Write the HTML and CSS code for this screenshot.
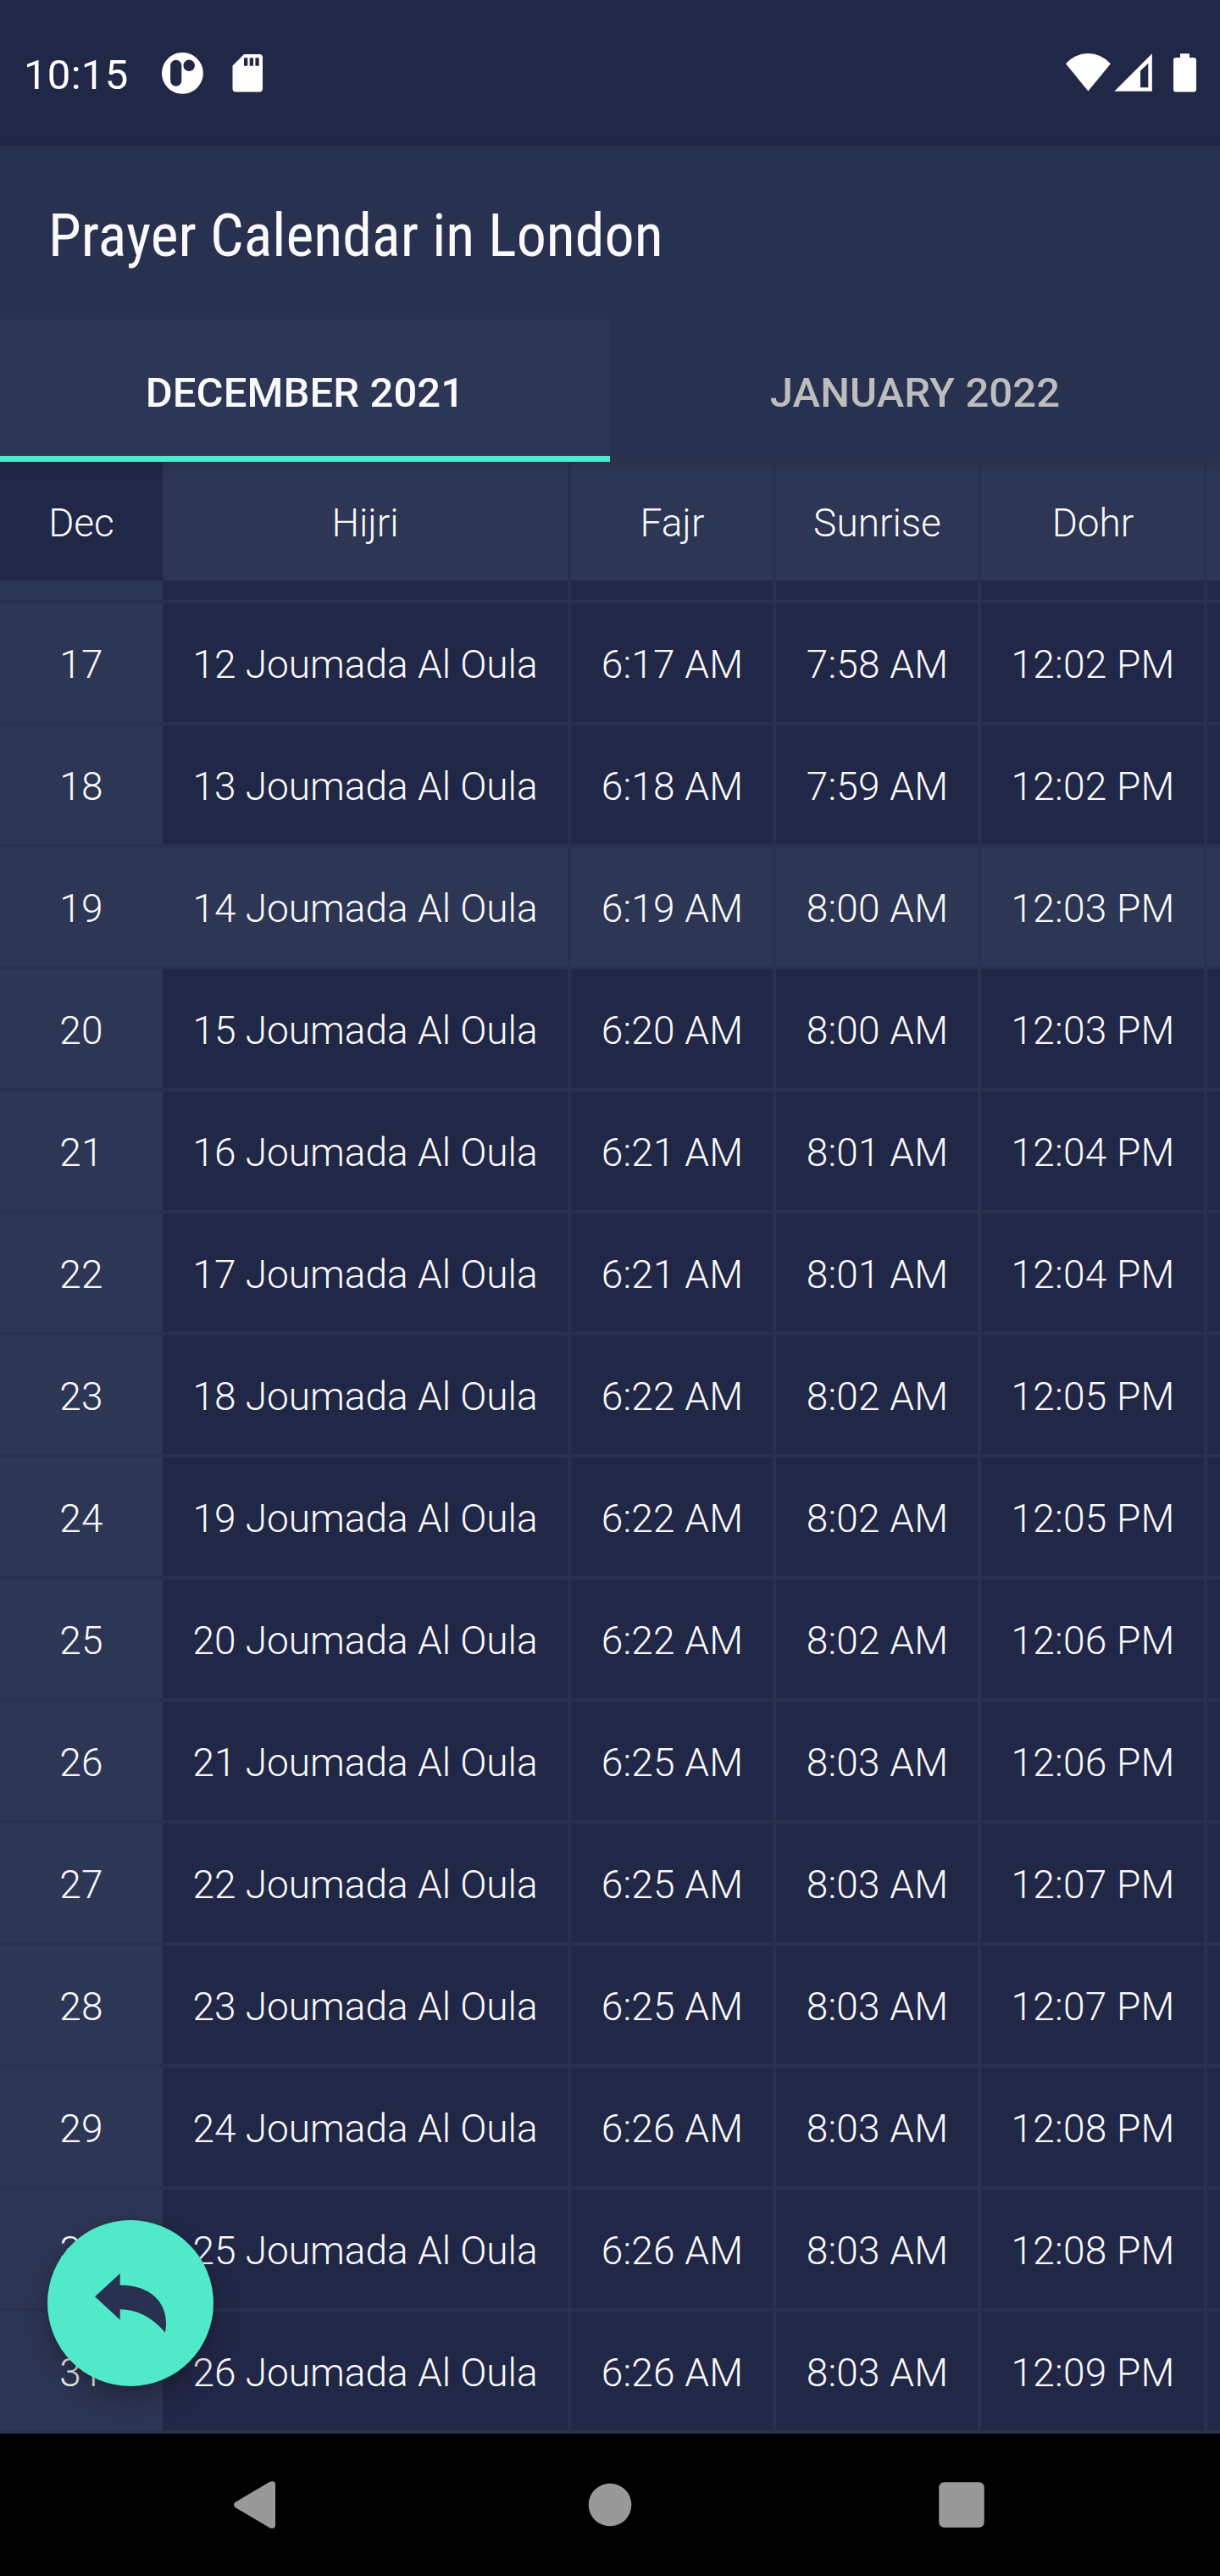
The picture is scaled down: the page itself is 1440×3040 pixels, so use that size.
FILE: index.html
```
<!DOCTYPE html>
<html lang="en">
<head>
<meta charset="utf-8">
<title>Prayer Calendar in London</title>
<link rel="stylesheet" href="styles.css">
</head>
<body>
<div class="screen">
  <div class="status-bar">
    <span class="clock">10:15</span>
    <svg class="notif-icons" viewBox="190 60 124 52" width="124" height="52">
      <path fill="#fff" fill-rule="evenodd" d="M215.4 62a24.4 24.4 0 1 0 .01 0zM207.7 70.7a6.6 6.6 0 0 1 6.6 6.6v17.8a6.6 6.6 0 0 1-13.2 0V77.3a6.6 6.6 0 0 1 6.6-6.6zM223.2 70.6a6.7 6.7 0 1 1-.01 0z"/>
      <path fill="#fff" fill-rule="evenodd" d="M288 64H306a4 4 0 0 1 4 4V104.500a4 4 0 0 1-4 4H278.500a4 4 0 0 1-4-4V77.500zM288 68.300V77.700H292.300V68.300zM294.700 68.300V77.700H299V68.300zM301.400 68.300V77.700H305.700V68.300z"/>
    </svg>
    <svg class="system-icons" viewBox="1256 60 158 52" width="158" height="52">
      <path fill="#fff" d="M1284.400 107.500L1258 75.200Q1269.500 63 1284.400 63T1310.900 75.200z"/>
      <path fill="#fff" fill-rule="evenodd" d="M1315.300 107.700L1359.800 63.200V107.700zM1346 83.600V103.200H1355.300V74.800z"/>
      <path fill="#fff" d="M1393 63.200H1404V68H1409a3 3 0 0 1 3 3V105.500a3 3 0 0 1-3 3H1388a3 3 0 0 1-3-3V71a3 3 0 0 1 3-3H1393z"/>
    </svg>
  </div>

  <header class="app-bar">
    <h1 class="title">Prayer Calendar in London</h1>
    <nav class="tabs">
      <div class="tab active">DECEMBER 2021</div>
      <div class="tab january">JANUARY 2022</div>
    </nav>
  </header>

  <div class="row head"><div class="day">Dec</div><div>Hijri</div><div>Fajr</div><div>Sunrise</div><div>Dohr</div><div></div></div>

  <main class="body">
    <div class="row partial"><div class="day"></div><div></div><div></div><div></div><div></div><div></div></div>
    <div class="row"><div class="day">17</div><div>12 Joumada Al Oula</div><div>6:17 AM</div><div>7:58 AM</div><div>12:02 PM</div><div></div></div>
    <div class="row"><div class="day">18</div><div>13 Joumada Al Oula</div><div>6:18 AM</div><div>7:59 AM</div><div>12:02 PM</div><div></div></div>
    <div class="row today"><div class="day">19</div><div>14 Joumada Al Oula</div><div>6:19 AM</div><div>8:00 AM</div><div>12:03 PM</div><div></div></div>
    <div class="row"><div class="day">20</div><div>15 Joumada Al Oula</div><div>6:20 AM</div><div>8:00 AM</div><div>12:03 PM</div><div></div></div>
    <div class="row"><div class="day">21</div><div>16 Joumada Al Oula</div><div>6:21 AM</div><div>8:01 AM</div><div>12:04 PM</div><div></div></div>
    <div class="row"><div class="day">22</div><div>17 Joumada Al Oula</div><div>6:21 AM</div><div>8:01 AM</div><div>12:04 PM</div><div></div></div>
    <div class="row"><div class="day">23</div><div>18 Joumada Al Oula</div><div>6:22 AM</div><div>8:02 AM</div><div>12:05 PM</div><div></div></div>
    <div class="row"><div class="day">24</div><div>19 Joumada Al Oula</div><div>6:22 AM</div><div>8:02 AM</div><div>12:05 PM</div><div></div></div>
    <div class="row"><div class="day">25</div><div>20 Joumada Al Oula</div><div>6:22 AM</div><div>8:02 AM</div><div>12:06 PM</div><div></div></div>
    <div class="row"><div class="day">26</div><div>21 Joumada Al Oula</div><div>6:25 AM</div><div>8:03 AM</div><div>12:06 PM</div><div></div></div>
    <div class="row"><div class="day">27</div><div>22 Joumada Al Oula</div><div>6:25 AM</div><div>8:03 AM</div><div>12:07 PM</div><div></div></div>
    <div class="row"><div class="day">28</div><div>23 Joumada Al Oula</div><div>6:25 AM</div><div>8:03 AM</div><div>12:07 PM</div><div></div></div>
    <div class="row"><div class="day">29</div><div>24 Joumada Al Oula</div><div>6:26 AM</div><div>8:03 AM</div><div>12:08 PM</div><div></div></div>
    <div class="row"><div class="day">30</div><div>25 Joumada Al Oula</div><div>6:26 AM</div><div>8:03 AM</div><div>12:08 PM</div><div></div></div>
    <div class="row"><div class="day">31</div><div>26 Joumada Al Oula</div><div>6:26 AM</div><div>8:03 AM</div><div>12:09 PM</div><div></div></div>
  </main>

  <div class="fab">
    <svg viewBox="0 0 196 196" width="196" height="196">
      <path fill="#28314f" d="M56 90.300L85.700 63V76.700C122 76.700 140 97 140 121.500Q140 127 139 132.700C123 114 105 105.300 85.700 105.300V117.700z"/>
    </svg>
  </div>

  <div class="nav-bar">
    <svg viewBox="0 0 50 56" width="50" height="56"><path fill="#999" d="M1.500 25L42.500 .8Q49 -1.500 49 4.500V51.500Q49 57.500 42.500 55.200L1.500 31Q-1.500 28 1.500 25z"/></svg>
    <svg class="home" viewBox="0 0 52 52" width="52" height="52"><circle cx="26" cy="26" r="25.300" fill="#999"/></svg>
    <svg viewBox="0 0 54 54" width="54" height="54"><rect x=".3" y=".3" width="53.400" height="53.400" rx="6" fill="#999"/></svg>
  </div>
</div>
</body>
</html>
```
FILE: styles.css
```
* {
  box-sizing: border-box;
}

body {
  margin: 0;
  background: #000;
  color: #fafafa;
  font-family: Roboto, sans-serif;
}

.screen {
  position: relative;
  width: 1440px;
  height: 3040px;
  overflow: hidden;
}

.screen svg {
  display: block;
  flex: none;
}

.status-bar {
  display: flex;
  align-items: flex-start;
  height: 172px;
  padding: 0 26px 0 28px;
  background: #212747;
}

.clock {
  width: 162px;
  padding-top: 5px;
  font-size: 49px;
  line-height: 167px;
  letter-spacing: 0.3px;
  color: #fff;
}

.notif-icons,
.system-icons {
  margin-top: 60px;
}

.system-icons {
  margin-left: auto;
}

.app-bar {
  position: relative;
  z-index: 1;
  background: #28314f;
  box-shadow: 0 2px 14px rgba(20, 10, 20, 0.14);
}

.title {
  height: 205px;
  margin: 0;
  padding: 7px 0 0 57px;
  font: 400 70px/198px "Roboto Condensed", Roboto, sans-serif;
  font-stretch: condensed;
  letter-spacing: 0.05px;
}

.tabs {
  display: grid;
  grid-template-columns: 1fr 1fr;
  height: 168px;
}

.tab {
  padding-top: 5px;
  font-size: 49px;
  font-weight: 500;
  line-height: 163px;
  letter-spacing: 0.1px;
  text-align: center;
  color: #bdbdbd;
}

.tab.active {
  height: 168px;
  border-bottom: 7px solid #50e9ca;
  background: #2d3655;
  color: #fafafa;
}

.row {
  display: grid;
  grid-template-columns: 192px 482px 242px 242px 267px 15px;
  height: 144px;
  border-bottom: 4px solid #28314f;
  background: #212747;
  font-size: 46px;
  font-weight: 300;
  line-height: 136px;
  letter-spacing: 0.25px;
  text-align: center;
  white-space: nowrap;
}

.row > div {
  padding: 4px 0 0 1px;
  border-right: 4px solid #28314f;
}

.row > div:nth-child(2) {
  padding-left: 0;
  letter-spacing: 0;
}

.row > div:last-child {
  border-right: 0;
}

.row > .day {
  padding-left: 0;
  border-right: 0;
  background: #2d3655;
}

.row.head {
  height: 140px;
  border-bottom: 0;
  background: #2d3655;
  letter-spacing: 0;
}

.row.head > .day {
  background: #212747;
}

.row.partial {
  height: 27px;
}

.row.today {
  background: #2d3655;
}

.fab {
  position: absolute;
  left: 56px;
  top: 2620px;
  z-index: 2;
  width: 196px;
  height: 196px;
  border-radius: 50%;
  background: #50e9ca;
  box-shadow: 0 16px 30px rgba(20, 15, 20, 0.32), 0 2px 8px rgba(0, 0, 0, 0.12);
}

.nav-bar {
  display: flex;
  align-items: center;
  justify-content: space-between;
  height: 168px;
  padding: 0 278px 0 276px;
  background: #000;
}

.nav-bar .home {
  margin-left: 6px;
}
```
